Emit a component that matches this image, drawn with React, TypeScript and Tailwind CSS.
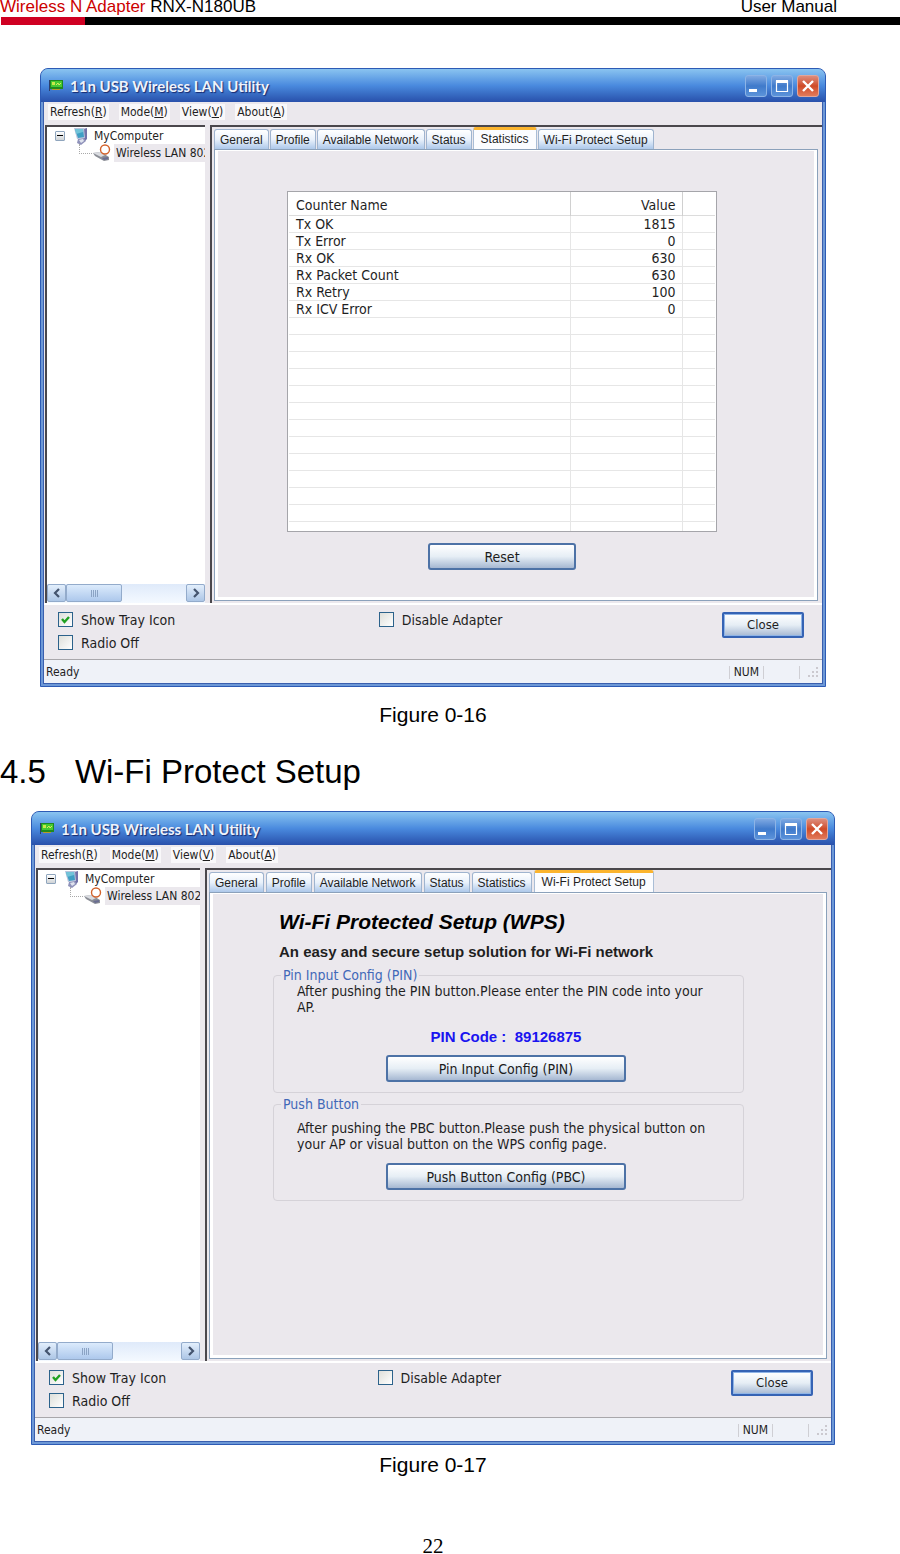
import { useState } from 'react'
import type { ReactNode } from 'react'
import { clsx } from 'clsx'

const tabs = [
  'General',
  'Profile',
  'Available Network',
  'Status',
  'Statistics',
  'Wi-Fi Protect Setup',
]

const menus = [
  { label: 'Refresh', accel: 'R' },
  { label: 'Mode', accel: 'M' },
  { label: 'View', accel: 'V' },
  { label: 'About', accel: 'A' },
]

const counters = [
  { name: 'Tx OK', value: 1815 },
  { name: 'Tx Error', value: 0 },
  { name: 'Rx OK', value: 630 },
  { name: 'Rx Packet Count', value: 630 },
  { name: 'Rx Retry', value: 100 },
  { name: 'Rx ICV Error', value: 0 },
]

const emptyRows = Array.from({ length: 12 }, (_, i) => i)

function CardIcon() {
  return (
    <svg width="15" height="11" viewBox="0 0 15 11" className="shrink-0">
      <rect x="0" y="0" width="1" height="11" fill="#2c3e6b" />
      <rect x="1" y="0" width="13" height="9" fill="#1f8a1f" />
      <rect x="2" y="1" width="11" height="6" fill="#46c932" />
      <rect x="3" y="2" width="3" height="3" fill="#c9e84a" />
      <path d="M7 5l2-2 1 2 2-2" stroke="#d8ef5c" fill="none" />
      <rect x="3" y="9" width="8" height="1" fill="#b99a2a" />
    </svg>
  )
}

function ComputerIcon() {
  return (
    <svg width="17" height="18" viewBox="0 0 17 18" className="shrink-0">
      <path d="M10 2l4-1v11l-3 3z" fill="#7272a8" />
      <path d="M1 1h10l1 10-8 1z" fill="#b9c3dc" />
      <path d="M2 2h8l1 8-6 1z" fill="#3f9fc4" />
      <path d="M2 2h8v3l-7 2z" fill="#71c3d8" />
      <path d="M5 12l6-1 2 3-5 4-4-2z" fill="#8f92ba" />
      <path d="M6 13l4-1 1 2-3 2z" fill="#dfe3ee" />
    </svg>
  )
}

function AdapterIcon() {
  return (
    <svg width="20" height="18" viewBox="0 0 20 18" className="shrink-0">
      <path d="M1 9l8-1 8 5v3l-5 1-9-5z" fill="#8b8e96" />
      <path d="M1 9l7-1 5 3-4 2z" fill="#d9dbe0" />
      <path d="M10 14l6-1v2l-4 1z" fill="#6a6d92" />
      <circle cx="13" cy="5.5" r="4.5" fill="#fff" stroke="#d2622c" strokeWidth="1.4" />
    </svg>
  )
}

function ScrollArrow({ left }: { left?: boolean }) {
  return (
    <button
      aria-label={left ? 'Scroll left' : 'Scroll right'}
      className="flex h-[18px] w-[19px] shrink-0 items-center justify-center rounded-xs border border-[#93abcb] bg-linear-to-b from-[#e3effc] to-[#adc6e6]"
    >
      <svg width="8" height="10" viewBox="0 0 8 10">
        <path
          d={left ? 'M6 1L2 5l4 4' : 'M2 1l4 4-4 4'}
          fill="none"
          stroke="#44546e"
          strokeWidth="2.2"
        />
      </svg>
    </button>
  )
}

function TitleButton({ kind }: { kind: 'min' | 'max' | 'close' }) {
  return (
    <button
      aria-label={kind}
      className={clsx(
        'flex size-[22px] items-center justify-center rounded-[3px] border',
        kind === 'close'
          ? 'border-[#e0a79c] bg-linear-to-b from-[#dc8c7c] via-[#cf4a26] to-[#e27a5a]'
          : 'border-[#8db4e6] bg-linear-to-b from-[#7fa9e2] via-[#3f7acb] to-[#5c93da]'
      )}
    >
      <svg width="16" height="16" viewBox="0 0 16 16" fill="none" stroke="#fff">
        {kind === 'min' && <path d="M1 12.5h8" strokeWidth="3" />}
        {kind === 'max' && (
          <>
            <path d="M2.5 3v10.5h11V3" strokeWidth="1.2" />
            <path d="M2 3.5h12" strokeWidth="3" />
          </>
        )}
        {kind === 'close' && <path d="M3 3l10 10M13 3L3 13" strokeWidth="2.4" />}
      </svg>
    </button>
  )
}

function PushButton({ children, className }: { children: ReactNode; className?: string }) {
  return (
    <button
      className={clsx(
        'h-[27px] rounded-[3px] border-2 border-[#4d72a6] bg-linear-to-b from-white via-[#e6eef5] to-[#a6b8d2] text-sm leading-4 text-[#1c1c1c]',
        className
      )}
    >
      {children}
    </button>
  )
}

function CheckBox({ label, checked }: { label: string; checked?: boolean }) {
  return (
    <label className="flex h-[15px] items-center gap-2 text-sm leading-4">
      <span className="relative size-[15px]">
        <input
          type="checkbox"
          defaultChecked={checked}
          className="peer block size-[15px] appearance-none border border-[#2c628b] bg-linear-to-br from-[#dedfda] to-white"
        />
        <svg
          viewBox="0 0 15 15"
          className="pointer-events-none absolute inset-0 hidden size-[15px] peer-checked:block"
        >
          <path d="M4 7l2.5 3L11 5" fill="none" stroke="#21a121" strokeWidth="2.4" />
        </svg>
      </span>
      {label}
    </label>
  )
}

function DeviceTree({ className }: { className: string }) {
  return (
    <div
      className={clsx(
        'flex shrink-0 flex-col overflow-hidden border-t-2 border-l-2 border-[#4a474c] bg-white text-xs',
        className
      )}
    >
      <div className="flex h-[17px] items-center pl-2 whitespace-nowrap">
        <button
          aria-label="Collapse"
          className="flex size-[10px] items-center justify-center rounded-[1px] border border-[#8fa5bd] bg-linear-to-b from-white to-[#cfd3d6]"
        >
          <span className="h-px w-1.5 bg-black" />
        </button>
        <span className="ml-2">
          <ComputerIcon />
        </span>
        <span className="ml-1">MyComputer</span>
      </div>
      <div className="flex h-[18px] whitespace-nowrap">
        <span className="ml-8 h-[10px] w-[13px] shrink-0 border-b border-l border-dotted border-[#a9a9a9]" />
        <AdapterIcon />
        <span className="ml-0.5 flex-1 bg-[#ebe8ed] pl-0.5 leading-[18px]">Wireless LAN 802</span>
      </div>
      <div className="mt-auto flex h-[19px] bg-linear-to-b from-[#dfeafa] to-[#f4f9ff]">
        <ScrollArrow left />
        <div className="flex h-[18px] w-[56px] items-center justify-center gap-px rounded-xs border border-[#93abcb] bg-linear-to-b from-[#dcebfc] to-[#adc8ec]">
          <span className="h-[7px] w-px bg-[#8ba3c4]" />
          <span className="h-[7px] w-px bg-[#8ba3c4]" />
          <span className="h-[7px] w-px bg-[#8ba3c4]" />
          <span className="h-[7px] w-px bg-[#8ba3c4]" />
        </div>
        <span className="flex-1" />
        <ScrollArrow />
      </div>
    </div>
  )
}

function StatisticsPanel() {
  return (
    <div className="ml-[69px] flex w-[430px] max-w-full flex-col items-center pt-10">
      <div className="w-full border border-[#a5a5aa] bg-white px-px">
        <table className="w-full table-fixed border-collapse text-sm leading-4">
          <colgroup>
            <col />
            <col className="w-[112px]" />
            <col className="w-[33px]" />
          </colgroup>
          <thead>
            <tr className="h-[23px] border-b border-[#dcdcdc]">
              <th className="border-r border-[#d0d0d0] p-0 pt-1 pl-[7px] text-left font-normal">
                Counter Name
              </th>
              <th className="border-r border-[#d0d0d0] p-0 pt-1 pr-[6px] text-right font-normal">
                Value
              </th>
              <th className="p-0" />
            </tr>
          </thead>
          <tbody>
            {counters.map(({ name, value }) => (
              <tr key={name} className="h-[17px] border-b border-[#e6e6e6]">
                <td className="border-r border-[#e6e6e6] p-0 pl-[7px]">{name}</td>
                <td className="border-r border-[#e6e6e6] p-0 pr-[6px] text-right">{value}</td>
                <td className="p-0" />
              </tr>
            ))}
            {emptyRows.map(i => (
              <tr key={i} className="h-[17px] border-b border-[#e6e6e6]">
                <td className="border-r border-[#e6e6e6] p-0" />
                <td className="border-r border-[#e6e6e6] p-0" />
                <td className="p-0" />
              </tr>
            ))}
            <tr className="h-[10px]">
              <td className="border-r border-[#e6e6e6] p-0" />
              <td className="border-r border-[#e6e6e6] p-0" />
              <td className="p-0" />
            </tr>
          </tbody>
        </table>
      </div>
      <PushButton className="mt-[11px] w-[148px]">Reset</PushButton>
    </div>
  )
}

function Group({ title, children }: { title: string; children: ReactNode }) {
  return (
    <fieldset className="rounded-[4px] border border-[#d5d2d8] pr-7 pb-[10px] pl-[23px] text-sm leading-4">
      <legend className="-ml-4 px-0.5 text-[#4268b8]">{title}</legend>
      {children}
    </fieldset>
  )
}

function WpsPanel() {
  return (
    <div className="ml-[60px] w-[471px] max-w-full pt-4">
      <h3 className="pl-[6px] font-[Liberation_Sans,sans-serif] text-[21px] leading-6 font-bold text-black italic">
        Wi-Fi Protected Setup (WPS)
      </h3>
      <p className="mt-2 mb-[5px] pl-[6px] font-[Liberation_Sans,sans-serif] text-[15px] leading-5 font-bold">
        An easy and secure setup solution for Wi-Fi network
      </p>
      <div className="flex flex-col gap-[3px]">
        <Group title="Pin Input Config (PIN)">
          <p>After pushing the PIN button.Please enter the PIN code into your AP.</p>
          <p className="mt-3 text-center font-[Liberation_Sans,sans-serif] text-[15px] leading-5 font-bold text-[#1a14f0]">
            PIN Code :&nbsp; 89126875
          </p>
          <PushButton className="mx-auto mt-2 block w-[240px]">Pin Input Config (PIN)</PushButton>
        </Group>
        <Group title="Push Button">
          <p className="pt-2">
            After pushing the PBC button.Please push the physical button on your AP or visual
            button on the WPS config page.
          </p>
          <PushButton className="mx-auto mt-[11px] block w-[240px]">
            Push Button Config (PBC)
          </PushButton>
        </Group>
      </div>
    </div>
  )
}

type UtilityWindowProps = {
  initialTab: string
  treeClass: string
  tabsClass: string
  bodyClass: string
}

function UtilityWindow({ initialTab, treeClass, tabsClass, bodyClass }: UtilityWindowProps) {
  const [active, setActive] = useState(initialTab)

  return (
    <section className="rounded-t-lg border border-[#2d5bb5] bg-[#6d98d6] font-[DejaVu_Sans_Condensed,Noto_Sans,sans-serif] text-[#1f1f1f]">
      <header className="flex h-[33px] items-center rounded-t-[7px] bg-linear-to-b from-[#8ac4f0] via-[#4a8ade] via-50% to-[#2950ab] pr-[6px] pl-2">
        <CardIcon />
        <h2 className="ml-[6px] pt-px font-[Lato,sans-serif] text-[15px] leading-5 font-bold text-[#eef3fb] [text-shadow:1px_1px_1px_#17296e]">
          11n USB Wireless LAN Utility
        </h2>
        <div className="ml-auto flex gap-1">
          <TitleButton kind="min" />
          <TitleButton kind="max" />
          <TitleButton kind="close" />
        </div>
      </header>

      <div className="mx-0.5 mb-0.5 border-x border-b border-[#3a5fae] bg-[#ebe8ed]">
        <nav className="flex h-[23px] items-center gap-[10px] pb-1 pl-1 text-xs">
          {menus.map(({ label, accel }) => (
            <button key={label} className="h-4 bg-white/70 px-0.5 leading-4">
              {label}(<span className="underline">{accel}</span>)
            </button>
          ))}
        </nav>

        <div className={clsx('flex border-b-2 border-white pl-px', bodyClass)}>
          <DeviceTree className={treeClass} />
          <div className="ml-[5px] flex min-w-0 flex-1 flex-col border-t-2 border-l-2 border-[#4a474c] pr-1 pb-0.5 pl-0.5">
            <div
              role="tablist"
              className={clsx(
                'flex h-[22px] items-end font-[Liberation_Sans,sans-serif] text-xs',
                tabsClass
              )}
            >
              {tabs.map(tab => (
                <button
                  key={tab}
                  role="tab"
                  aria-selected={tab === active}
                  onClick={() => setActive(tab)}
                  className={clsx(
                    'shrink-0 rounded-t-[3px] border-x whitespace-nowrap',
                    tab === active
                      ? 'h-[22px] border-t-[3px] border-x-[#a9bdd6] border-t-[#fbb42e] bg-[#fbfcff] px-[7px] pb-0.5'
                      : 'h-5 border-t border-[#9fb4cf] bg-linear-to-b from-white via-[#e9f1fb] to-[#adc8ea] px-[5px]'
                  )}
                >
                  {tab}
                </button>
              ))}
            </div>
            <div className="flex-1 border border-[#8ba1bb] bg-white px-[3px] pt-px pb-[3px]">
              <div role="tabpanel" className="h-full bg-[#ebe8ed]">
                {active === 'Statistics' && <StatisticsPanel />}
                {active === 'Wi-Fi Protect Setup' && <WpsPanel />}
              </div>
            </div>
          </div>
        </div>

        <div className="flex h-[54px] items-start pr-[18px] pl-[14px]">
          <div className="flex w-[43%] flex-col gap-2 pt-[7px]">
            <CheckBox label="Show Tray Icon" checked />
            <CheckBox label="Radio Off" />
          </div>
          <div className="pt-[7px]">
            <CheckBox label="Disable Adapter" />
          </div>
          <button className="mt-[7px] ml-auto h-[26px] w-[82px] rounded-[2px] border-2 border-[#3563b4] bg-linear-to-b from-white via-[#e6eef5] to-[#a6b8d2] text-[13px] leading-4 ring-1 ring-[#8fb4e6] ring-inset">
            Close
          </button>
        </div>

        <footer className="flex h-6 items-center border-t border-[#a9a7ab] bg-[#eff2f8] pt-px pr-[3px] pl-0.5 text-xs">
          <span>Ready</span>
          <span className="ml-auto flex h-[13px] items-center border-x border-[#cfcfd4] px-1">
            NUM
          </span>
          <span className="mr-1.5 h-[13px] w-9 border-r border-[#cfcfd4]" />
          <svg width="13" height="13" viewBox="0 0 13 13" fill="#cbc9cf">
            <path d="M10 1h2v2h-2zM10 5h2v2h-2zM6 5h2v2H6zM10 9h2v2h-2zM6 9h2v2H6zM2 9h2v2H2z" />
          </svg>
        </footer>
      </div>
    </section>
  )
}

export default function App() {
  return (
    <div className="bg-white font-[Liberation_Sans,sans-serif] text-black">
      <header>
        <div className="flex justify-between pr-[63px] pb-1 text-[17px] leading-[13px]">
          <p>
            <span className="text-[#cc0000]">Wireless N Adapter</span> RNX-N180UB
          </p>
          <p>User Manual</p>
        </div>
        <div className="ml-px h-2 border-l-[84px] border-[#cf0022] bg-black" />
      </header>

      <main className="pr-[34px]">
        <figure className="px-10 pt-[43px]">
          <UtilityWindow
            initialTab="Statistics"
            treeClass="w-[160px]"
            tabsClass="gap-px"
            bodyClass="min-h-[480px]"
          />
          <figcaption className="pt-4 text-center text-[21px] leading-6">Figure 0-16</figcaption>
        </figure>

        <h1 className="mt-[25px] flex gap-[29px] text-[33px] leading-10">
          <span>4.5</span>
          <span>Wi-Fi Protect Setup</span>
        </h1>

        <figure className="px-[31px] pt-[19px]">
          <UtilityWindow
            initialTab="Wi-Fi Protect Setup"
            treeClass="w-[164px]"
            tabsClass="gap-0.5"
            bodyClass="min-h-[495px]"
          />
          <figcaption className="pt-2 text-center text-[21px] leading-6">Figure 0-17</figcaption>
        </figure>

        <p className="pt-[61px] text-center font-[Liberation_Serif,serif] text-[21px] leading-4">
          22
        </p>
      </main>
    </div>
  )
}
